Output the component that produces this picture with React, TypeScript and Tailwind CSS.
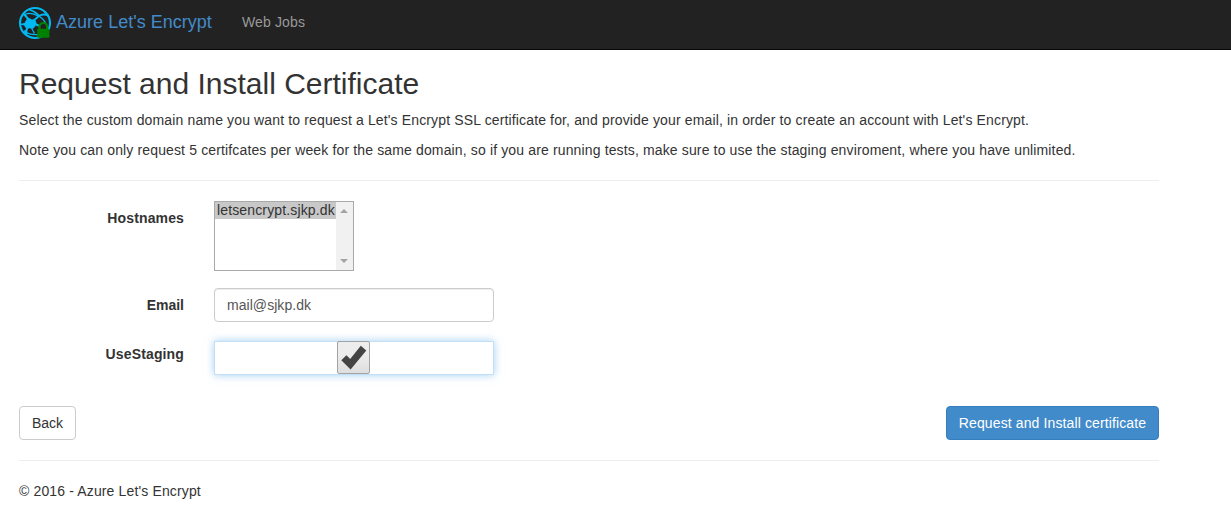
import React from "react";

function Logo() {
  return (
    <svg width="34" height="34" viewBox="0 0 34 34" className="block">
      <circle cx="17" cy="17" r="15" fill="none" stroke="#00b9f2" strokeWidth="2.1" />
      <g fill="none" stroke="#00b9f2">
        <path d="M6 8 L11 14" strokeWidth="2" />
        <path d="M15 15 L21 10 C24 8 27 8 30.5 9.5" strokeWidth="2" />
        <path d="M7 8.5 C11 6.5 15 7 20 10" strokeWidth="1.3" />
        <path d="M11 3.5 C15 4.5 18 6.5 21 9.5" strokeWidth="1.6" />
        <path d="M17 18 L24 21" strokeWidth="2" />
        <path d="M21 10 C25 13 27 15 28 18" strokeWidth="1.2" />
        <path d="M10.5 20 L7.5 26" strokeWidth="2" />
        <path d="M8 26.5 C12 28.8 16 29 21 28.5" strokeWidth="1.3" />
        <path d="M13 21 L16.5 27.5" strokeWidth="1.2" />
      </g>
      <path d="M8.5 13.5 L11 12 L14 13.5 L17 13.5 L18.5 17 L17.5 20 L15 22.8 L11.5 22.3 L8 22.2 L6 19.3 L2.5 19 L2.5 17.8 L6.5 17 Z" fill="#00b9f2" />
      <path d="M5.5 25 L8 23.7 L9.8 26 L9 28.5 L7 28 Z" fill="#00b9f2" />
      <path d="M21.5 24 V20.8 A3.8 3.8 0 0 1 29.1 20.8 V24" fill="#222" stroke="#008000" strokeWidth="2.2" />
      <rect x="19.2" y="22.8" width="12.2" height="9" rx="1" fill="#008000" />
    </svg>
  );
}

function HostnameList() {
  return (
    <div className="flex h-[70px] w-[140px] border border-[#a9a9a9] bg-white">
      <div className="flex-1">
        <div className="h-[17px] bg-[#c8c8c8] pl-[2px] leading-[16px] whitespace-nowrap">letsencrypt.sjkp.dk</div>
      </div>
      <div className="flex w-[17px] flex-col items-center justify-between bg-[#f1f1f1] pt-[7px] pr-px pb-[7px]">
        <svg width="8" height="4" viewBox="0 0 8 4"><path d="M0 4 L4 0 L8 4 Z" fill="#a3a3a3" /></svg>
        <svg width="8" height="4" viewBox="0 0 8 4"><path d="M0 0 L4 4 L8 0 Z" fill="#a3a3a3" /></svg>
      </div>
    </div>
  );
}

function StagingCheckbox() {
  return (
    <div className="flex h-[34px] w-[280px] border border-[#c1e0f7] bg-white pl-[122px] shadow-[0_0_8px_rgba(102,175,233,0.6)]">
      <div className="-my-px flex h-[33px] w-[33px] items-center justify-center rounded-[2px] border border-[#a3a3a3] bg-linear-to-b from-[#ededed] from-38% to-[#dedede]">
        <svg width="31" height="31" viewBox="0 0 31 31">
          <path d="M3.3 18.3 L8.4 13.2 L12.2 17 L22.8 3.8 L28.3 8.5 L12.6 27.4 Z" fill="#444" />
        </svg>
      </div>
    </div>
  );
}

interface FieldProps {
  label: string;
  className: string;
  labelClassName?: string;
  children: React.ReactNode;
}

function Field({ label, className, labelClassName = "pt-[7px]", children }: FieldProps) {
  return (
    <div className={`flex items-start ${className}`}>
      <div className={`mr-[30px] w-[165px] text-right font-bold ${labelClassName}`}>{label}</div>
      {children}
    </div>
  );
}

export default function App() {
  return (
    <div className="h-[512px] overflow-hidden bg-white font-['Liberation_Sans',Arial,sans-serif] text-[14px] leading-[20px] tracking-[0.14px] text-[#333]">
      <nav className="flex h-[50px] border-b border-[#080808] bg-[#222] pl-[18px]">
        <div className="pt-[6px]"><Logo /></div>
        <span className="ml-[4px] w-[156px] pt-[12px] text-[18px] tracking-[0.02px] whitespace-nowrap text-[#428bca]">Azure Let's Encrypt</span>
        <span className="ml-[30px] pt-[12px] text-[#999]">Web Jobs</span>
      </nav>
      <main className="ml-[19px] w-[1140px] pt-[17px]">
        <h2 className="text-[30px] leading-[33px] tracking-normal">Request and Install Certificate</h2>
        <p className="mt-[10px] whitespace-nowrap">Select the custom domain name you want to request a Let's Encrypt SSL certificate for, and provide your email, in order to create an account with Let's Encrypt.</p>
        <p className="mt-[10px] whitespace-nowrap">Note you can only request 5 certifcates per week for the same domain, so if you are running tests, make sure to use the staging enviroment, where you have unlimited.</p>
        <hr className="mt-[20px] border-[#eee]" />
        <Field label="Hostnames" className="mt-[20px]"><HostnameList /></Field>
        <Field label="Email" className="mt-[17px]" labelClassName="pt-[7px] tracking-normal">
          <div className="h-[34px] w-[280px] rounded-[4px] border border-[#ccc] px-[12px] py-[6px] tracking-[0.05px] text-[#555] shadow-[inset_0_1px_1px_rgba(0,0,0,0.075)]">mail@sjkp.dk</div>
        </Field>
        <Field label="UseStaging" className="mt-[19px]" labelClassName="pt-[3px]"><StagingCheckbox /></Field>
        <div className="mt-[31px] flex justify-between">
          <button className="h-[34px] w-[57px] rounded-[4px] border border-[#ccc] bg-white tracking-normal">Back</button>
          <button className="h-[34px] w-[213px] rounded-[4px] border border-[#357ebd] bg-[#428bca] tracking-[0.12px] whitespace-nowrap text-white">Request and Install certificate</button>
        </div>
        <hr className="mt-[20px] border-[#eee]" />
        <footer className="mt-[20px]">© 2016 - Azure Let's Encrypt</footer>
      </main>
    </div>
  );
}
